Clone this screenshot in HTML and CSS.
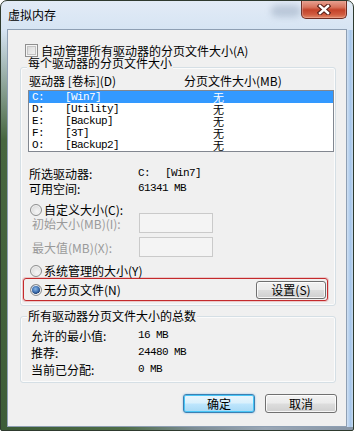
FILE: index.html
```html
<!DOCTYPE html>
<html lang="zh-CN">
<head>
  <meta charset="UTF-8" />
  <title>虚拟内存</title>
  <link rel="stylesheet" href="styles.css">
</head>
<body>

<div class="window">
  <!-- TITLE BAR -->
  <div class="titlebar">
    <span class="title">虚拟内存</span>
    <div class="glare"></div>
    <div class="close">
      <svg width="14" height="11" viewBox="0 0 14 11">
        <path d="M3 2 L11 9 M11 2 L3 9" stroke="#5a2018" stroke-width="4.6" stroke-linecap="square" fill="none"/>
        <path d="M3 2 L11 9 M11 2 L3 9" stroke="#ffffff" stroke-width="2.4" stroke-linecap="square" fill="none"/>
      </svg>
    </div>
  </div>

  <!-- CLIENT AREA -->
  <div class="client">
    <div class="check-row"><span class="checkbox"></span>自动管理所有驱动器的分页文件大小(A)</div>

    <div class="group group-drives">
      <div class="group-title">每个驱动器的分页文件大小</div>
      <div class="list-head"><span class="head-drive">驱动器 [卷标](D)</span><span>分页文件大小(MB)</span></div>

      <div class="listbox">
        <div class="list-row selected"><span class="c-letter">C:</span><span class="c-label">[Win7]</span><span class="c-size">无</span></div>
        <div class="list-row"><span class="c-letter">D:</span><span class="c-label">[Utility]</span><span class="c-size">无</span></div>
        <div class="list-row"><span class="c-letter">E:</span><span class="c-label">[Backup]</span><span class="c-size">无</span></div>
        <div class="list-row"><span class="c-letter">F:</span><span class="c-label">[3T]</span><span class="c-size">无</span></div>
        <div class="list-row"><span class="c-letter">O:</span><span class="c-label">[Backup2]</span><span class="c-size">无</span></div>
      </div>

      <div class="info">
        <div class="info-row"><span class="info-key">所选驱动器:</span><span class="mono"><span class="v-drive">C:</span>[Win7]</span></div>
        <div class="info-row"><span class="info-key">可用空间:</span><span class="mono">61341 MB</span></div>
      </div>

      <div class="radio-row r-custom"><span class="radio"></span>自定义大小(C):</div>
      <div class="field-row f-first"><span class="field-label">初始大小(MB)(I):</span><span class="field"></span></div>
      <div class="field-row f-second"><span class="field-label">最大值(MB)(X):</span><span class="field"></span></div>
      <div class="radio-row r-system"><span class="radio"></span>系统管理的大小(Y)</div>

      <div class="highlight">
        <div class="radio-row"><span class="radio checked"></span>无分页文件(N)</div>
        <button class="btn btn-set">设置(S)</button>
      </div>
    </div>

    <div class="group group-total">
      <div class="group-title">所有驱动器分页文件大小的总数</div>
      <div class="totals">
        <div class="total-row"><span class="total-key">允许的最小值:</span><span class="mono">16 MB</span></div>
        <div class="total-row"><span class="total-key">推荐:</span><span class="mono">24480 MB</span></div>
        <div class="total-row"><span class="total-key">当前已分配:</span><span class="mono">0 MB</span></div>
      </div>
    </div>

    <div class="actions">
      <button class="btn btn-default">确定</button>
      <button class="btn">取消</button>
    </div>
  </div>
</div>

</body>
</html>
```

FILE: styles.css
```css
:root {
  --dialog-bg: #f0f0f0;
  --group-line: #d5dfe5;
  --text: #000;
  --disabled: #9a9a9a;
}

* {
  box-sizing: border-box;
  margin: 0;
  padding: 0;
}

body {
  background: #ffffff;
  font-family: "Noto Sans CJK SC", "Liberation Sans", sans-serif;
  font-size: 12px;
  color: var(--text);
}

/* window frame */
.window {
  width: 354px;
  height: 431px;
  border: 1px solid #2e3a2e;
  border-radius: 7px 7px 2px 2px;
  display: flex;
  flex-direction: column;
  background:
    linear-gradient(to bottom, rgba(70,100,64,0) 0, #47663f 110px, #3c5c37 100%) left 29px / 6px 100% no-repeat,
    linear-gradient(to right, #3b5a36 0, #4f6e48 35%, #7d8d95 55%, #9aa7b5 75%, #8896a6 100%) left bottom / 100% 3px no-repeat,
    linear-gradient(to right, #cfe0f3 0, #a6c6ea 60%, #c5d9ef 100%) right 29px / 6px 100% no-repeat,
    linear-gradient(to bottom, #e2ebf6 0, #d6e4f3 30px, #c9dbef 100%);
  overflow: hidden;
}

.titlebar {
  height: 28px;
  display: flex;
  align-items: flex-start;
  padding-left: 7px;
}

.title {
  line-height: 28px;
  font-size: 12px;
  color: #000;
}

.glare {
  width: 30px;
  height: 12px;
  margin: 4px 0 0 auto;
  border-radius: 6px;
  background: rgba(120, 140, 165, 0.35);
  filter: blur(3px);
}

.close {
  width: 46px;
  height: 19px;
  margin: -1px 6px 0 0;
  border: 1px solid #6e2c22;
  border-top: none;
  border-radius: 0 0 5px 5px;
  background: linear-gradient(to bottom, #e9a899 0, #d8735d 40%, #c4432a 55%, #d05b3f 80%, #e08a6a 100%);
  box-shadow: inset 0 0 0 1px rgba(255, 200, 190, 0.35);
  display: flex;
  align-items: center;
  justify-content: center;
}

/* client area */
.client {
  flex: 1;
  margin: 0 6px 3px 6px;
  border: 1px solid #8e9fb3;
  background: var(--dialog-bg);
}

.check-row {
  display: flex;
  align-items: center;
  height: 14px;
  margin: 13px 0 0 17px;
}

.checkbox {
  width: 13px;
  height: 13px;
  margin-right: 3px;
  border: 1px solid #8f8f8f;
  background: linear-gradient(135deg, #d2d2d2 0, #e6e6e6 50%, #f6f6f6 100%);
  box-shadow: inset 0 0 0 1px #f4f4f4, inset 0 0 0 2px #c4c4c4;
}

/* group boxes */
.group {
  margin: 0 10px 0 12px;
  border: 1px solid var(--group-line);
  border-radius: 3px;
  box-shadow: inset 0 0 0 1px rgba(255, 255, 255, 0.7);
}

.group-drives {
  margin-top: 10px;
  padding-bottom: 4px;
}

.group-total {
  margin-top: 10px;
  padding-bottom: 4px;
}

.group-title {
  width: fit-content;
  height: 14px;
  line-height: 14px;
  margin: -12px 0 0 6px;
  padding: 0 1px;
  background: var(--dialog-bg);
}

.group-total .group-title {
  margin-top: -8px;
}

.list-head {
  display: flex;
  height: 14px;
  line-height: 14px;
  margin-top: 4px;
  padding-left: 8px;
}

.head-drive {
  width: 155px;
}

.listbox {
  margin: 2px 1px 0 7px;
  border: 1px solid #828790;
  background: #fff;
  height: 62px;
}

.list-row {
  display: flex;
  height: 12px;
  line-height: 12px;
  padding-left: 3px;
}

.list-row.selected {
  background: #3399ff;
  color: #fff;
}

.mono,
.c-letter,
.c-label {
  font-family: "Liberation Mono", "Noto Sans CJK SC", monospace;
  font-size: 11px;
  letter-spacing: -0.6px;
}

.c-letter {
  width: 33px;
}

.c-label {
  width: 148px;
}

.c-size {
  font-size: 11px;
}

.info {
  margin-top: 14px;
  padding-left: 8px;
}

.info-row {
  display: flex;
  height: 15px;
  line-height: 15px;
}

.info-key {
  width: 109px;
}

.v-drive {
  display: inline-block;
  width: 27px;
}

/* radios and fields */
.radio-row {
  display: flex;
  align-items: center;
  height: 14px;
  line-height: 14px;
}

.r-custom,
.r-system {
  margin-top: 7px;
  padding-left: 9px;
}

.radio {
  width: 12px;
  height: 12px;
  margin-right: 2px;
  border-radius: 50%;
  border: 1px solid #8e8f8f;
  background: radial-gradient(circle at 60% 65%, #f6f6f6 0, #dcdcdc 70%, #cfcfcf 100%);
  box-shadow: inset 0 0 0 1px #f2f2f2;
}

.radio.checked {
  background:
    radial-gradient(circle at 45% 40%, #8ab8e8 0, #3d6fb0 40%, #1d3f72 58%, transparent 62%),
    radial-gradient(circle, #f4f4f4 0, #d8d8d8 100%);
}

.field-row {
  display: flex;
  align-items: center;
  height: 20px;
  padding-left: 11px;
  color: var(--disabled);
}

.f-first {
  margin-top: -4px;
}

.f-second {
  margin-top: 4px;
}

.field-label {
  width: 107px;
}

.field {
  width: 74px;
  height: 20px;
  border: 1px solid #cacaca;
  background: #f4f4f4;
}

.highlight {
  display: flex;
  align-items: center;
  justify-content: space-between;
  height: 23px;
  margin: 0 7px 0 2px;
  padding: 0 1px 0 6px;
  border: 1px solid #c42a2c;
  border-radius: 3px;
  box-shadow: 0 0 0 1px rgba(214, 80, 82, 0.25);
}

/* buttons */
.btn {
  font-family: "Noto Sans CJK SC", "Liberation Sans", sans-serif;
  font-size: 12px;
  color: #000;
  border: 1px solid #707070;
  border-radius: 3px;
  background: linear-gradient(to bottom, #f2f2f2 0, #ebebeb 48%, #dddddd 52%, #cfcfcf 100%);
  box-shadow: inset 0 0 0 1px rgba(255, 255, 255, 0.8);
  line-height: 16px;
}

.btn-set {
  width: 70px;
  height: 18px;
}

.totals {
  margin-top: 4px;
  padding-left: 10px;
}

.total-row {
  display: flex;
  height: 17px;
  line-height: 17px;
}

.total-key {
  width: 107px;
}

.actions {
  display: flex;
  justify-content: flex-end;
  gap: 10px;
  margin-top: 11px;
  padding-right: 9px;
}

.actions .btn {
  width: 72px;
  height: 19px;
}

.btn-default {
  border-color: #3c7fb1;
  background: linear-gradient(to bottom, #eaf6fd 0, #d9f0fc 48%, #bee6fd 52%, #a7d9f5 100%);
  box-shadow: inset 0 0 0 1px #48c6f7, 0 0 2px rgba(60, 150, 220, 0.6);
}
```
